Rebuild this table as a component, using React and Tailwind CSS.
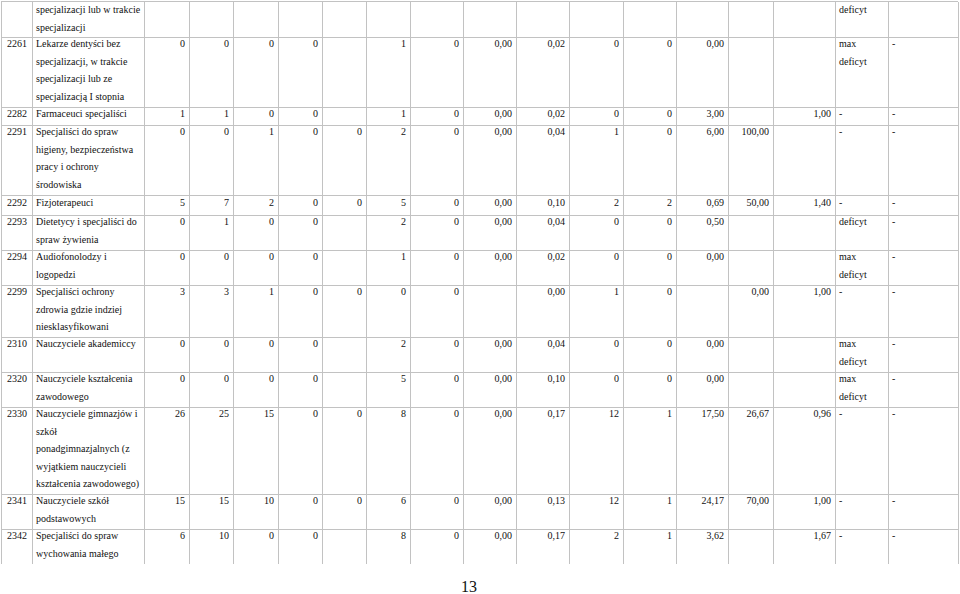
import React from "react";

const rows = [
  {
    h: "h-[36px]",
    shift: "-mt-[1px]",
    code: "",
    name: ["specjalizacji lub w trakcie", "specjalizacji"],
    v: ["", "", "", "", "", "", "", "", "", "", "", "", "", "", ["deficyt"], ""],
  },
  {
    h: "h-[70px]",
    code: "2261",
    name: ["Lekarze dentyści bez", "specjalizacji, w trakcie", "specjalizacji lub ze", "specjalizacją I stopnia"],
    v: ["0", "0", "0", "0", "", "1", "0", "0,00", "0,02", "0", "0", "0,00", "", "", ["max", "deficyt"], "-"],
  },
  {
    h: "h-[18px]",
    code: "2282",
    name: ["Farmaceuci specjaliści"],
    v: ["1", "1", "0", "0", "", "1", "0", "0,00", "0,02", "0", "0", "3,00", "", "1,00", "-", "-"],
  },
  {
    h: "h-[70px]",
    code: "2291",
    name: ["Specjaliści do spraw", "higieny, bezpieczeństwa", "pracy i ochrony", "środowiska"],
    v: ["0", "0", "1", "0", "0", "2", "0", "0,00", "0,04", "1", "0", "6,00", "100,00", "", "-", "-"],
  },
  {
    h: "h-[20px]",
    shift: "-mt-[2px]",
    code: "2292",
    name: ["Fizjoterapeuci"],
    v: ["5", "7", "2", "0", "0", "5", "0", "0,00", "0,10", "2", "2", "0,69", "50,00", "1,40", "-", "-"],
  },
  {
    h: "h-[35px]",
    code: "2293",
    name: ["Dietetycy i specjaliści do", "spraw żywienia"],
    v: ["0", "1", "0", "0", "", "2", "0", "0,00", "0,04", "0", "0", "0,50", "", "", ["deficyt"], "-"],
  },
  {
    h: "h-[35px]",
    code: "2294",
    name: ["Audiofonolodzy i", "logopedzi"],
    v: ["0", "0", "0", "0", "", "1", "0", "0,00", "0,02", "0", "0", "0,00", "", "", ["max", "deficyt"], "-"],
  },
  {
    h: "h-[52px]",
    code: "2299",
    name: ["Specjaliści ochrony", "zdrowia gdzie indziej", "niesklasyfikowani"],
    v: ["3", "3", "1", "0", "0", "0", "0", "", "0,00", "1", "0", "", "0,00", "1,00", "-", "-"],
  },
  {
    h: "h-[35px]",
    code: "2310",
    name: ["Nauczyciele akademiccy"],
    v: ["0", "0", "0", "0", "", "2", "0", "0,00", "0,04", "0", "0", "0,00", "", "", ["max", "deficyt"], "-"],
  },
  {
    h: "h-[35px]",
    code: "2320",
    name: ["Nauczyciele kształcenia", "zawodowego"],
    v: ["0", "0", "0", "0", "", "5", "0", "0,00", "0,10", "0", "0", "0,00", "", "", ["max", "deficyt"], "-"],
  },
  {
    h: "h-[87px]",
    code: "2330",
    name: ["Nauczyciele gimnazjów i", "szkół", "ponadgimnazjalnych (z", "wyjątkiem nauczycieli", "kształcenia zawodowego)"],
    v: ["26", "25", "15", "0", "0", "8", "0", "0,00", "0,17", "12", "1", "17,50", "26,67", "0,96", "-", "-"],
  },
  {
    h: "h-[35px]",
    code: "2341",
    name: ["Nauczyciele szkół", "podstawowych"],
    v: ["15", "15", "10", "0", "0", "6", "0", "0,00", "0,13", "12", "1", "24,17", "70,00", "1,00", "-", "-"],
  },
  {
    h: "h-[34px]",
    last: true,
    code: "2342",
    name: ["Specjaliści do spraw", "wychowania małego"],
    v: ["6", "10", "0", "0", "", "8", "0", "0,00", "0,17", "2", "1", "3,62", "", "1,67", "-", "-"],
  },
];

function Lines({ value }) {
  const arr = Array.isArray(value) ? value : [value];
  return arr.map((t, i) => (
    <div key={i} className="whitespace-nowrap">
      {t}
    </div>
  ));
}

function Cell({ row, children, align }) {
  return (
    <div
      className={`${row.h} overflow-hidden border-r border-[#c2c2c2] ${row.last ? "" : "border-b"} ${align}`}
    >
      <div className={row.shift ? row.shift : "-mt-[3px]"}>{children}</div>
    </div>
  );
}

export default function App() {
  return (
    <div className="h-[594px] w-[960px] overflow-hidden bg-white font-['Liberation_Serif','Times_New_Roman',serif] text-[10px] leading-[17.5px] text-[#111]">
      <div className="ml-[1px] mt-[1px] grid w-[957px] grid-cols-[31px_112px_45px_44px_45px_44px_44px_44px_53px_53px_53px_54px_53px_52px_45px_62px_53px_70px] border-l border-t border-[#c2c2c2]">
        {rows.map((row, ri) => (
          <React.Fragment key={ri}>
            <Cell row={row} align="pl-[5px]">
              {row.code}
            </Cell>
            <Cell row={row} align="pl-[3px]">
              <Lines value={row.name} />
            </Cell>
            {row.v.map((val, ci) => (
              <Cell
                key={ci}
                row={row}
                align={ci >= 14 ? "pl-[3px] text-left" : "pr-[4px] text-right"}
              >
                <Lines value={val} />
              </Cell>
            ))}
          </React.Fragment>
        ))}
      </div>
      <div className="mt-[15px] pr-[22px] text-center text-[16px] leading-[16px]">13</div>
    </div>
  );
}
